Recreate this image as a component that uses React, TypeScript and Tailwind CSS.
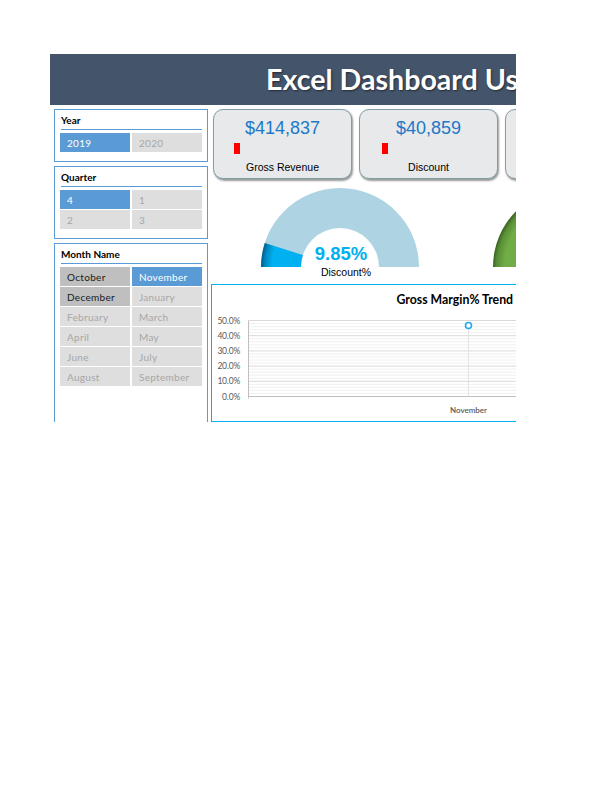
import React from "react";

type State = "sel" | "dark" | "off";

const btnCls: Record<State, string> = {
  sel: "bg-[#5b9bd5] text-white",
  dark: "bg-[#bfbfbf] text-[#1a1a1a]",
  off: "bg-[#dedede] text-[#a6a6a6]",
};

function Slicer({
  title,
  items,
  className,
}: {
  title: string;
  items: [string, State][];
  className: string;
}) {
  return (
    <div className={`w-[154px] shrink-0 border border-[#5b9bd5] px-[5px] ${className}`}>
      <div className="h-[19px] flex items-center pl-[1px] text-[10px] font-bold text-black leading-none">
        {title}
      </div>
      <div className="h-px bg-[#5b9bd5] ml-[1px]" />
      <div className="mt-[3px] grid grid-cols-2 gap-x-[2px] gap-y-px">
        {items.map(([label, s]) => (
          <div
            key={label}
            className={`h-[19px] flex items-center pl-[7px] text-[10px] tracking-[0.3px] leading-none ${btnCls[s]}`}
          >
            {label}
          </div>
        ))}
      </div>
    </div>
  );
}

function Card({ value, label, barLeft }: { value?: string; label?: string; barLeft: string }) {
  return (
    <div className="w-[139px] h-[70px] shrink-0 rounded-[10px] border border-[#7f9ea6] bg-[#e7e9eb] shadow-[1px_1.5px_2px_rgba(0,0,0,0.4)] flex flex-col font-['Liberation_Sans',Arial,sans-serif]">
      {value ? (
        <>
          <div className="pt-[8px] h-[28px] text-center text-[18px] leading-[20px] text-[#1e78c8]">{value}</div>
          <div className={`mt-[5px] h-[11px] w-[6px] bg-[#ff0000] ${barLeft}`} />
          <div className="mt-[7px] h-[12px] text-center text-[10.5px] leading-[12px] text-black">{label}</div>
        </>
      ) : null}
    </div>
  );
}

function Gauges() {
  const cx = 132;
  const cy = 88;
  const R = 79;
  const r = 39;
  const ring = (c: number) =>
    `M ${c - R} ${cy} A ${R} ${R} 0 0 1 ${c + R} ${cy} L ${c + r} ${cy} A ${r} ${r} 0 0 0 ${c - r} ${cy} Z`;
  const ang = Math.PI - 0.0985 * Math.PI;
  const ox = cx + R * Math.cos(ang);
  const oy = cy - R * Math.sin(ang);
  const ix = cx + r * Math.cos(ang);
  const iy = cy - r * Math.sin(ang);
  const seg = `M ${cx - R} ${cy} A ${R} ${R} 0 0 1 ${ox} ${oy} L ${ix} ${iy} A ${r} ${r} 0 0 0 ${cx - r} ${cy} Z`;
  const gx = 364;
  return (
    <svg width="308" height="105" className="block shrink-0">
      <defs>
        <radialGradient id="bg1" gradientUnits="userSpaceOnUse" cx={cx} cy={cy} r={R}>
          <stop offset="0.86" stopColor="#00b0f0" />
          <stop offset="0.95" stopColor="#0088c0" />
          <stop offset="1" stopColor="#005d8c" />
        </radialGradient>
        <radialGradient id="gg1" gradientUnits="userSpaceOnUse" cx={gx} cy={cy} r={R}>
          <stop offset="0.85" stopColor="#70ad47" />
          <stop offset="0.95" stopColor="#5a8f36" />
          <stop offset="1" stopColor="#3b6122" />
        </radialGradient>
      </defs>
      <path d={ring(cx)} fill="#aed4e3" />
      <path d={seg} fill="url(#bg1)" />
      <path d={ring(gx)} fill="url(#gg1)" />
      <text
        x="133"
        y="74"
        textAnchor="middle"
        dominantBaseline="central"
        fontFamily="'Liberation Sans', Arial, sans-serif"
        fontWeight="bold"
        fontSize="18.5"
        fill="#00b0f0"
      >
        9.85%
      </text>
      <text
        x="138"
        y="93"
        textAnchor="middle"
        dominantBaseline="central"
        fontFamily="'Liberation Sans', Arial, sans-serif"
        fontSize="10.5"
        fill="#000"
      >
        Discount%
      </text>
    </svg>
  );
}

function Chart() {
  const top = 35.5;
  const step = 15.2;
  const left = 36.5;
  const labels = ["50.0%", "40.0%", "30.0%", "20.0%", "10.0%", "0.0%"];
  const minor: number[] = [];
  for (let i = 0; i < 5; i++) {
    for (let j = 1; j < 5; j++) minor.push(top + i * step + (j * step) / 5);
  }
  const px = 256.5;
  const py = 40.5;
  return (
    <svg width="330" height="136" className="block">
      <text
        x="184.5"
        y="14.5"
        dominantBaseline="central"
        fontFamily="Lato, 'Open Sans', sans-serif"
        fontWeight="bold"
        fontSize="12.3"
        fill="#000"
      >
        Gross Margin% Trend
      </text>
      {minor.map((y, i) => (
        <line key={"m" + i} x1={left} x2="330" y1={y} y2={y} stroke="#ececec" strokeWidth="0.8" />
      ))}
      {labels.map((_, i) => (
        <line
          key={"M" + i}
          x1={left}
          x2="330"
          y1={top + i * step}
          y2={top + i * step}
          stroke={i === 5 ? "#bfbfbf" : "#d9d9d9"}
          strokeWidth="1"
        />
      ))}
      <line x1={left} x2={left} y1={top} y2={top + 5 * step + 2} stroke="#bfbfbf" strokeWidth="1" />
      {labels.map((l, i) => (
        <text
          key={l}
          x="28"
          y={top + i * step}
          textAnchor="end"
          dominantBaseline="central"
          fontFamily="Lato, 'Open Sans', sans-serif"
          fontSize="8.5"
          letterSpacing="-0.2"
          fill="#595959"
        >
          {l}
        </text>
      ))}
      <line x1={px} x2={px} y1={py} y2={top + 5 * step} stroke="#e3e3e3" strokeWidth="1" />
      <circle cx={px} cy={py} r="3" fill="#fff" stroke="#1fa8ea" strokeWidth="1.6" />
      <text
        x={px}
        y="124.5"
        textAnchor="middle"
        dominantBaseline="central"
        fontFamily="Lato, 'Open Sans', sans-serif"
        fontWeight="600"
        fontSize="8"
        fill="#595959"
      >
        November
      </text>
    </svg>
  );
}

export default function App() {
  return (
    <div className="pt-[54px] pl-[50px] bg-white min-h-[792px] font-[Lato,'Open_Sans',sans-serif]">
      <div className="w-[466px] h-[368px] overflow-hidden flex flex-col bg-white">
        <div className="h-[51px] shrink-0 bg-[#44546a] flex items-center pl-[216px] overflow-hidden whitespace-nowrap">
          <span className="text-[28.6px] font-bold text-white leading-none [text-shadow:1px_1px_2px_rgba(0,0,0,0.5)]">
            Excel Dashboard Using Pivot Tables
          </span>
        </div>
        <div className="flex flex-1 min-h-0">
          <div className="w-[158px] shrink-0 pl-[4px] pt-[4px] flex flex-col gap-[4px]">
            <Slicer
              title="Year"
              className="h-[53px]"
              items={[
                ["2019", "sel"],
                ["2020", "off"],
              ]}
            />
            <Slicer
              title="Quarter"
              className="h-[73px]"
              items={[
                ["4", "sel"],
                ["1", "off"],
                ["2", "off"],
                ["3", "off"],
              ]}
            />
            <Slicer
              title="Month Name"
              className="h-[200px]"
              items={[
                ["October", "dark"],
                ["November", "sel"],
                ["December", "dark"],
                ["January", "off"],
                ["February", "off"],
                ["March", "off"],
                ["April", "off"],
                ["May", "off"],
                ["June", "off"],
                ["July", "off"],
                ["August", "off"],
                ["September", "off"],
              ]}
            />
          </div>
          <div className="flex-1 min-w-0 flex flex-col pt-[4px]">
            <div className="flex gap-[7px] pl-[5px] shrink-0">
              <Card value="$414,837" label="Gross Revenue" barLeft="ml-[20px]" />
              <Card value="$40,859" label="Discount" barLeft="ml-[22px]" />
              <Card barLeft="ml-[20px]" />
            </div>
            <Gauges />
            <div className="ml-[3px] w-[330px] h-[138px] shrink-0 border-[1.5px] border-[#00b0f0]">
              <Chart />
            </div>
          </div>
        </div>
      </div>
    </div>
  );
}
